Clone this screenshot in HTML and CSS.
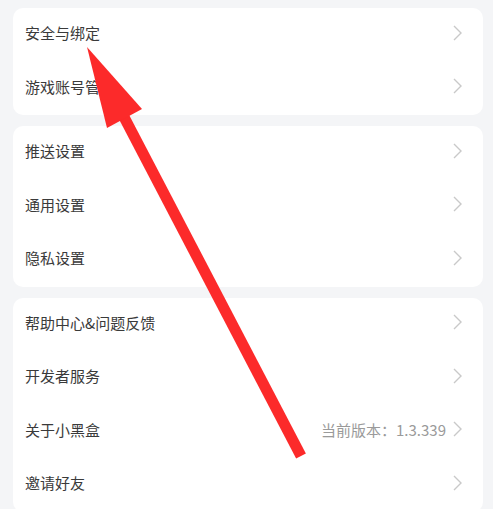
FILE: index.html
```html
<!DOCTYPE html>
<html lang="zh-CN">
<head>
    <meta charset="UTF-8">
    <meta name="viewport" content="width=device-width, initial-scale=1.0">
    <title>设置</title>
    <link rel="stylesheet" href="styles.css">
</head>
<body>
    <div class="page">
        <div class="card">
            <div class="row"><span class="label">安全与绑定</span><svg class="chevron" viewBox="0 0 9 16"><polyline points="1,1 8,8 1,15"/></svg></div>
            <div class="row"><span class="label">游戏账号管理</span><svg class="chevron" viewBox="0 0 9 16"><polyline points="1,1 8,8 1,15"/></svg></div>
        </div>

        <div class="card">
            <div class="row"><span class="label">推送设置</span><svg class="chevron" viewBox="0 0 9 16"><polyline points="1,1 8,8 1,15"/></svg></div>
            <div class="row"><span class="label">通用设置</span><svg class="chevron" viewBox="0 0 9 16"><polyline points="1,1 8,8 1,15"/></svg></div>
            <div class="row"><span class="label">隐私设置</span><svg class="chevron" viewBox="0 0 9 16"><polyline points="1,1 8,8 1,15"/></svg></div>
        </div>

        <div class="card">
            <div class="row"><span class="label">帮助中心&amp;问题反馈</span><svg class="chevron" viewBox="0 0 9 16"><polyline points="1,1 8,8 1,15"/></svg></div>
            <div class="row"><span class="label">开发者服务</span><svg class="chevron" viewBox="0 0 9 16"><polyline points="1,1 8,8 1,15"/></svg></div>
            <div class="row"><span class="label">关于小黑盒</span><span class="value">当前版本：1.3.339</span><svg class="chevron" viewBox="0 0 9 16"><polyline points="1,1 8,8 1,15"/></svg></div>
            <div class="row"><span class="label">邀请好友</span><svg class="chevron" viewBox="0 0 9 16"><polyline points="1,1 8,8 1,15"/></svg></div>
        </div>
    </div>

    <!-- annotation arrow drawn over the screenshot -->
    <svg class="arrow" width="493" height="509" viewBox="0 0 493 509">
        <line x1="124" y1="117" x2="301" y2="456" stroke="#fc2a2a" stroke-width="11"/>
        <polygon points="87,47 107,128 142,109" fill="#fc2a2a"/>
    </svg>
</body>
</html>
```

FILE: styles.css
```css
html, body {
    margin: 0;
    padding: 0;
    background: #f4f5f7;
}

body {
    font-family: "Noto Sans CJK SC", "Noto Sans", sans-serif;
    width: 493px;
    height: 509px;
    overflow: hidden;
    position: relative;
}

.page {
    padding: 8px 10px 0 13px;
    display: flex;
    flex-direction: column;
    gap: 11px;
}

.card {
    background: #fff;
    border-radius: 10px;
}

.row {
    height: 53.5px;
    box-sizing: border-box;
    display: flex;
    align-items: center;
    padding: 0 21px 4px 12px;
}

.label {
    flex: 1;
    font-size: 15px;
    color: #3a3a3a;
    white-space: nowrap;
}

.value {
    font-size: 15px;
    color: #9a9a9a;
    margin-right: 7px;
}

.chevron {
    width: 9px;
    height: 16px;
    fill: none;
    stroke: #c9c9c9;
    stroke-width: 1.4;
}

.arrow {
    position: absolute;
    left: 0;
    top: 0;
}
```
